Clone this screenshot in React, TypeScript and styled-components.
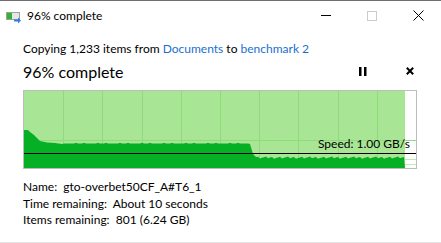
import React from "react";
import styled, { createGlobalStyle } from "styled-components";

const GlobalStyle = createGlobalStyle`
  html, body {
    margin: 0;
    padding: 0;
    background: #ffffff;
  }
  body {
    font-family: Lato, "Noto Sans", sans-serif;
    color: #000;
  }
`;

const Window = styled.div`
  width: 441px;
  height: 243px;
  box-sizing: border-box;
  border-top: 1px solid #6e6e6e;
  border-bottom: 1px solid #e5e5e5;
  background: #fff;
  display: flex;
  flex-direction: column;
  overflow: hidden;
`;

const TitleBar = styled.div`
  height: 29px;
  display: flex;
  align-items: center;
`;

const TitleIcon = styled.svg`
  margin-left: 6px;
  width: 16px;
  height: 16px;
  flex: none;
`;

const TitleText = styled.span`
  margin-left: 5px;
  font-size: 12px;
  flex: 1;
`;

const CaptionButton = styled.div`
  width: 46px;
  height: 29px;
  display: flex;
  align-items: center;
  justify-content: center;
`;

const MinGlyph = styled.div`
  width: 10px;
  height: 1px;
  background: #000;
`;

const MaxGlyph = styled.div`
  width: 8px;
  height: 8px;
  border: 1px solid #cccccc;
`;

const Body = styled.div`
  padding: 11px 24px 0 23px;
  display: flex;
  flex-direction: column;
`;

const CopyLine = styled.div`
  font-size: 12px;
  line-height: 16px;
`;

const Link = styled.span`
  color: #1a6fd0;
`;

const HeadRow = styled.div`
  display: flex;
  align-items: center;
  height: 24px;
  margin-top: 2px;
`;

const Heading = styled.div`
  font-size: 16px;
  flex: 1;
`;

const IconButton = styled.div<{ $gap?: number }>`
  width: 14px;
  height: 14px;
  display: flex;
  align-items: center;
  justify-content: center;
  margin-left: ${(p) => p.$gap ?? 0}px;
`;

const Graph = styled.div`
  margin-top: 7px;
  width: 394px;
  height: 79px;
  box-sizing: border-box;
  border: 1px solid #bcbcbc;
  position: relative;
`;

const GraphSvg = styled.svg`
  display: block;
  width: 392px;
  height: 77px;
`;

const SpeedLabel = styled.div`
  position: absolute;
  right: 6px;
  top: 46px;
  font-size: 12px;
  line-height: 14px;
`;

const Details = styled.div`
  margin-top: 10px;
  font-size: 12px;
  line-height: 16.5px;
`;

const DetailRow = styled.div``;

function buildArea(): string {
  const pts: [number, number][] = [
    [0, 39], [4, 39], [6, 41], [10, 44], [16, 50], [23, 51.5], [31, 52], [38, 53],
  ];
  const noise = (i: number) => ((i * 37) % 11) / 10;
  for (let x = 40; x <= 222; x += 2) {
    pts.push([x, 52.6 + (noise(x) > 0.8 ? -0.8 : 0)]);
  }
  pts.push([224, 52.5], [226, 53], [229, 63], [232, 66]);
  for (let x = 234; x <= 381; x += 2) {
    pts.push([x, 65.5 + noise(x) * 2.2]);
  }
  let d = "M0,77";
  pts.forEach(([x, y]) => (d += ` L${x},${y}`));
  d += " L381,77 Z";
  return d;
}

const areaPath = buildArea();
const vLines = Array.from({ length: 9 }, (_, i) => Math.round((i + 1) * 39.2));

export default function App() {
  return (
    <>
      <GlobalStyle />
      <Window>
        <TitleBar>
          <TitleIcon viewBox="0 0 16 16">
            <rect x="0.5" y="4.5" width="13" height="7" fill="#e6e6e6" stroke="#a0a0a0" />
            <rect x="1" y="5" width="5" height="6" fill="#2fb52f" />
            <path d="M8 11.5 H12 V9.5 L15 12.5 L12 15.5 V13.5 H8 Z" fill="#2f80dc" />
          </TitleIcon>
          <TitleText>96% complete</TitleText>
          <CaptionButton>
            <MinGlyph />
          </CaptionButton>
          <CaptionButton>
            <MaxGlyph />
          </CaptionButton>
          <CaptionButton>
            <svg width="11" height="11" viewBox="0 0 11 11">
              <path d="M0.5 0.5 L10.5 10.5 M10.5 0.5 L0.5 10.5" stroke="#000" strokeWidth="1" />
            </svg>
          </CaptionButton>
        </TitleBar>
        <Body>
          <CopyLine>
            Copying 1,233 items from <Link>Documents</Link> to <Link>benchmark 2</Link>
          </CopyLine>
          <HeadRow>
            <Heading>96% complete</Heading>
            <IconButton>
              <svg width="8" height="9" viewBox="0 0 8 9">
                <rect x="0" y="0" width="2.5" height="9" fill="#000" />
                <rect x="5" y="0" width="2.5" height="9" fill="#000" />
              </svg>
            </IconButton>
            <IconButton $gap={33}>
              <svg width="8" height="8" viewBox="0 0 8 8">
                <path d="M0.8 0.8 L7.2 7.2 M7.2 0.8 L0.8 7.2" stroke="#000" strokeWidth="2" />
              </svg>
            </IconButton>
          </HeadRow>
          <Graph>
            <GraphSvg viewBox="0 0 392 77">
              <rect x="0" y="0" width="381" height="77" fill="#a8e594" />
              {vLines.map((x) => (
                <line key={x} x1={x + 0.5} y1="0" x2={x + 0.5} y2="77" stroke="#90da7c" strokeWidth="1" />
              ))}
              <line x1="0" y1="49.5" x2="392" y2="49.5" stroke="#90da7c" strokeWidth="1" />
              <line x1="381" y1="68.5" x2="392" y2="68.5" stroke="#bfeab0" strokeWidth="1" />
              <line x1="381" y1="73.5" x2="392" y2="73.5" stroke="#bfeab0" strokeWidth="1" />
              <path d={areaPath} fill="#06b025" />
              <line x1="0" y1="62.5" x2="392" y2="62.5" stroke="#000" strokeWidth="1" />
            </GraphSvg>
            <SpeedLabel>Speed: 1.00 GB/s</SpeedLabel>
          </Graph>
          <Details>
            <DetailRow>Name:&nbsp; gto-overbet50CF_A#T6_1</DetailRow>
            <DetailRow>Time remaining:&nbsp; About 10 seconds</DetailRow>
            <DetailRow>Items remaining:&nbsp; 801 (6.24 GB)</DetailRow>
          </Details>
        </Body>
      </Window>
    </>
  );
}
